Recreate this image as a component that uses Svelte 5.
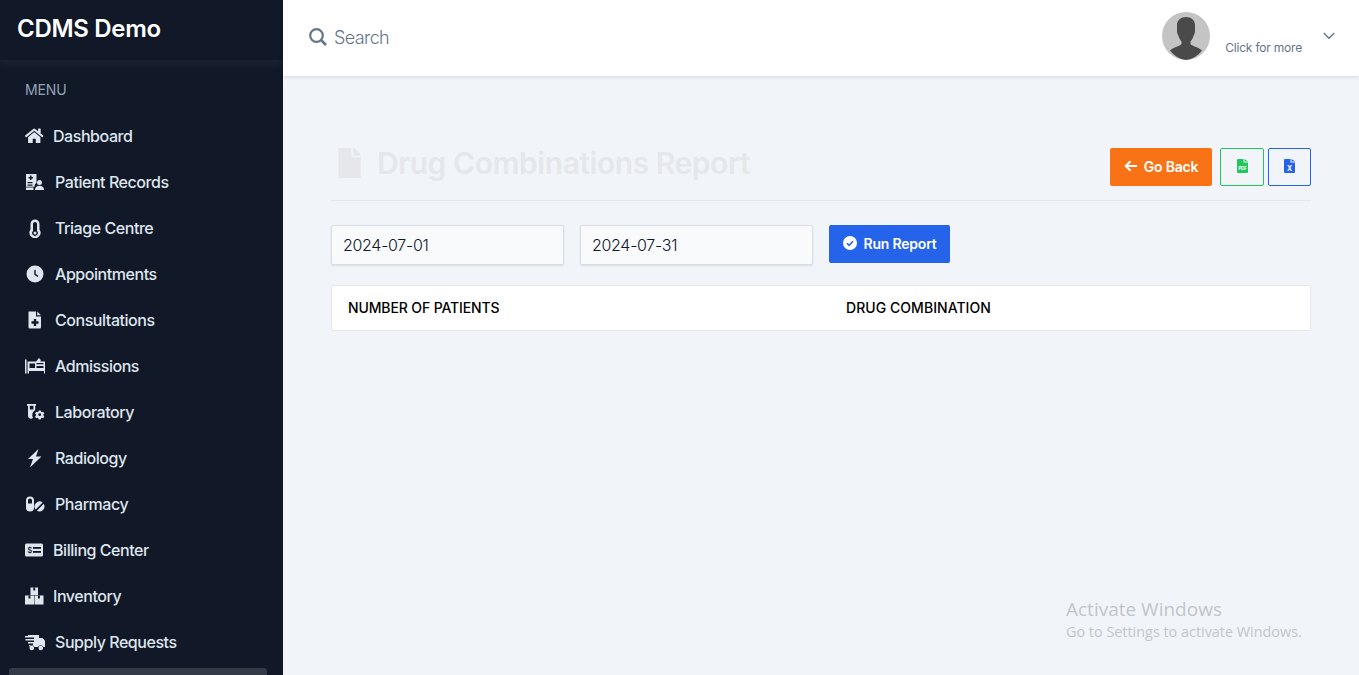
<script>
  const items = [
    { name: 'Dashboard', icon: 'home', wide: false },
    { name: 'Patient Records', icon: 'records', wide: true },
    { name: 'Triage Centre', icon: 'thermo', wide: true },
    { name: 'Appointments', icon: 'clock', wide: true },
    { name: 'Consultations', icon: 'medical', wide: true },
    { name: 'Admissions', icon: 'bed', wide: true },
    { name: 'Laboratory', icon: 'lab', wide: true },
    { name: 'Radiology', icon: 'bolt', wide: true },
    { name: 'Pharmacy', icon: 'pills', wide: true },
    { name: 'Billing Center', icon: 'bill', wide: false },
    { name: 'Inventory', icon: 'boxes', wide: false },
    { name: 'Supply Requests', icon: 'truck', wide: true }
  ];
</script>

<div class="shell">
  <aside class="sidebar">
    <div class="brand">CDMS Demo</div>
    <div class="menu-label">MENU</div>
    <nav class="nav">
      {#each items as item}
        <a class="nav-item" href="#top">
          <span class="nav-icon" class:wide={item.wide}>
            <svg viewBox="0 0 20 20" width="20" height="20" fill="currentColor">
              {#if item.icon === 'home'}
                <svg viewBox="0 0 576 512" x="0" y="1.5" width="18.500" height="16.500"><path d="M280.37 148.26L96 300.11V464a16 16 0 0 0 16 16l112.06-.29a16 16 0 0 0 15.92-16V368a16 16 0 0 1 16-16h64a16 16 0 0 1 16 16v95.64a16 16 0 0 0 16 16.05L464 480a16 16 0 0 0 16-16V300L295.67 148.26a12.19 12.19 0 0 0-15.3 0zM571.6 251.47L488 182.56V44.05a12 12 0 0 0-12-12h-56a12 12 0 0 0-12 12v72.61L318.47 43a48 48 0 0 0-61 0L4.34 251.47a12 12 0 0 0-1.6 16.9l25.5 31A12 12 0 0 0 45.15 301l235.22-193.74a12.19 12.19 0 0 1 15.3 0L530.9 301a12 12 0 0 0 16.9-1.6l25.5-31a12 12 0 0 0-1.7-16.93z"/></svg>
              {:else if item.icon === 'records'}
                <path fill-rule="evenodd" d="M1 2h10.500v8.700a4 4 0 0 0-2 4H1zM5 3.500V5H3.600v1.500H5V8h1.500V6.500H8V5H6.500V3.500zM2.500 10v1.200h5V10zM2.500 12.500v1.200h5v-1.200z"/>
                <path d="M1 15.500h7.500v2.500H1z"/>
                <circle cx="14.500" cy="10.500" r="2.500"/>
                <path d="M10 18c0-3 1.800-4.300 4.500-4.300s4.500 1.300 4.500 4.300z"/>
              {:else if item.icon === 'thermo'}
                <path fill-rule="evenodd" d="M10 1.500a4.500 4.500 0 0 1 4.500 4.500v5.500a5.500 5.500 0 1 1-9 0V6A4.500 4.500 0 0 1 10 1.500zm0 2.500A2 2 0 0 0 8 6v7a2.800 2.800 0 1 0 4 0V6a2 2 0 0 0-2-2z"/>
                <circle cx="10" cy="15" r="1.500"/>
              {:else if item.icon === 'clock'}
                <path fill-rule="evenodd" d="M10 1.500a8.500 8.500 0 1 1 0 17 8.500 8.500 0 0 1 0-17zM9.300 6v4.700l3.200 2.200.8-1.200-2.600-1.700V6z"/>
              {:else if item.icon === 'medical'}
                <path fill-rule="evenodd" d="M3.500 1.500h7.500v5h5v10.700a1.300 1.300 0 0 1-1.300 1.300H4.800a1.300 1.300 0 0 1-1.300-1.300zM8.800 9v2.300H6.500v2.400h2.300V16h2.400v-2.300h2.300v-2.400h-2.300V9zM12.200 1.500l3.800 3.800h-3.800z"/>
              {:else if item.icon === 'bed'}
                <svg x="0" y="0" width="21" height="20" viewBox="0 0 21 20"><path fill-rule="evenodd" d="M0 3.500h1.500V17.500H0zM2.500 5.500h8.500l3-3.500 2 2.300L15 5.500H20.500v12h-1.500V15H4v2.500H2.500zM4.500 7.500v4.500h5.500V7.500z"/><path d="M11.500 7h7v1.500h-7zM11.500 10h7v2h-7z" fill="#111827"/><path d="M11.500 8.500h7V10h-7z"/></svg>
              {:else if item.icon === 'lab'}
                <path fill-rule="evenodd" d="M2 2h9v1.800h-.8v4.300A5.500 5.500 0 0 0 8 15.800a2.900 2.900 0 0 1-5-2V3.800h-1zM4.800 3.800v3.600h3.600V3.800z"/>
                <path fill-rule="evenodd" d="M13.700 8.500h2l.3 1.200 1.100.6 1.200-.5 1 1.700-.9.900v1.200l.9.900-1 1.700-1.200-.5-1.100.6-.3 1.300h-2l-.3-1.300-1.100-.6-1.200.5-1-1.700.9-.9v-1.200l-.9-.9 1-1.700 1.200.5 1.100-.6zM14.700 11.300a1.400 1.400 0 1 0 0 2.800 1.400 1.400 0 0 0 0-2.800z"/>
              {:else if item.icon === 'bolt'}
                <path d="M13.500 1L3 11h5L5 19.500 16.500 8.500h-5.500z"/>
              {:else if item.icon === 'pills'}
                <path fill-rule="evenodd" d="M5 2.500a4 4 0 0 1 4 4v7a4 4 0 0 1-8 0v-7a4 4 0 0 1 4-4zm-2 7h4v-3a2 2 0 0 0-4 0z"/>
                <path d="M11 9a5 5 0 0 1 6.700-.4l-7 7A5 5 0 0 1 11 9zM18.700 9.800a5 5 0 0 1-6.800 6.900z"/>
              {:else if item.icon === 'bill'}
                <rect x="0" y="3.500" width="18" height="13" rx="1.500"/>
                <rect x="8" y="7" width="8" height="1.800" fill="#111827"/><rect x="8" y="11" width="8" height="1.800" fill="#111827"/>
                <text x="2.300" y="12.800" font-size="8" font-family="Inter, sans-serif" fill="#111827">$</text>
              {:else if item.icon === 'boxes'}
                <path d="M5.500 1.500h7.500v7.500H5.500zM0 9.500h9v9H0zM9.500 9.500h9v9h-9z"/>
                <path d="M8.300 1.500h1.900v3H8.300zM3.500 9.500h1.900v3H3.500zM13 9.500h1.900v3H13z" fill="#111827"/>
              {:else if item.icon === 'truck'}
                <svg x="0" y="0" width="21" height="20" viewBox="0 0 21 20"><path d="M3 3h11v3h3.500l3.500 4v5h-2.500a3 3 0 0 0-5.500 0H9.500a3 3 0 0 0-5.500 0V13h4v-1.500H3V10h6V8.500H.5V7H9V5.500H0V4h3z"/><circle cx="6.800" cy="16" r="2.300"/><circle cx="15.800" cy="16" r="2.300"/></svg>
              {/if}
            </svg>
          </span>
          <span>{item.name}</span>
        </a>
      {/each}
      <div class="nav-item active"></div>
    </nav>
  </aside>

  <div class="page">
    <header class="topbar">
      <div class="search">
        <svg viewBox="0 0 18 18" width="18" height="18" fill="none" stroke="currentColor"><circle cx="7.500" cy="7.500" r="6.300" stroke-width="2.200"/><path d="M12 12l5 5" stroke-width="2.600"/></svg>
        <span>Search</span>
      </div>
      <div class="user">
        <svg class="avatar" viewBox="0 0 48 48" width="48" height="48">
          <circle cx="24" cy="24" r="24" fill="#c4c4c4"/>
          <path fill="#4a4a4a" d="M15 13c0-5 4-8 9-8s9 3 9 8v6c0 2-.6 3-1.300 4.500-.7 2-1.700 4.500-3.200 6v2.500c0 1.500 9 3.500 11.500 6.500A24 24 0 0 1 24 48 24 24 0 0 1 8 38.500C10.500 35.500 19.500 33.500 19.500 32v-2.500c-1.500-1.500-2.500-4-3.200-6-.7-1.500-1.300-2.500-1.300-4.500z"/>
        </svg>
        <span class="more">Click for more</span>
        <svg class="chev" viewBox="0 0 12 8" width="12" height="8" fill="none" stroke="#64748b" stroke-width="1.300"><path d="M.7 1l5.300 5.300L11.300 1"/></svg>
      </div>
    </header>

    <main class="content">
      <div class="title-row">
        <h1>
          <svg viewBox="0 0 384 512" width="23" height="30" fill="currentColor"><path d="M224 136V0H24C10.700 0 0 10.700 0 24v464c0 13.300 10.700 24 24 24h336c13.300 0 24-10.700 24-24V160H248c-13.200 0-24-10.800-24-24zm160-14.100v6.100H256V0h6.100c6.400 0 12.500 2.500 17 7l97.900 98c4.500 4.500 7 10.600 7 16.900z"/></svg>
          Drug Combinations Report
        </h1>
        <div class="actions">
          <button class="btn back">
            <svg viewBox="0 0 14 12" width="14" height="12" fill="none" stroke="#fff" stroke-width="2"><path d="M13 6H2M6.500 1.200L1.700 6l4.800 4.800"/></svg>
            Go Back
          </button>
          <button class="btn outline pdf" aria-label="Export PDF">
            <svg viewBox="0 0 11 14" width="11" height="14"><path fill="#22c55e" d="M0 1a1 1 0 0 1 1-1h5.500v3.500H11V13a1 1 0 0 1-1 1H1a1 1 0 0 1-1-1zM7.500 0L11 2.500H7.500z"/><text x="5.500" y="10.500" font-size="4.500" font-weight="700" text-anchor="middle" fill="#fff" font-family="Inter, sans-serif">PDF</text></svg>
          </button>
          <button class="btn outline xls" aria-label="Export Excel">
            <svg viewBox="0 0 11 14" width="11" height="14"><path fill="#2563eb" d="M0 1a1 1 0 0 1 1-1h5.500v3.500H11V13a1 1 0 0 1-1 1H1a1 1 0 0 1-1-1zM7.500 0L11 2.500H7.500z"/><text x="5.500" y="11.500" font-size="7" font-weight="700" text-anchor="middle" fill="#fff" font-family="Inter, sans-serif">X</text></svg>
          </button>
        </div>
      </div>

      <div class="filters">
        <input class="date" value="2024-07-01" />
        <input class="date" value="2024-07-31" />
        <button class="btn run">
          <svg viewBox="0 0 14 14" width="14" height="14"><circle cx="7" cy="7" r="7" fill="#fff"/><path d="M4 7.200l2.100 2.100L10 5.300" fill="none" stroke="#2563eb" stroke-width="1.600"/></svg>
          Run Report
        </button>
      </div>

      <table class="report">
        <thead>
          <tr><th class="col-a">NUMBER OF PATIENTS</th><th class="col-b">DRUG COMBINATION</th></tr>
        </thead>
      </table>
    </main>
  </div>

  <div class="watermark">
    <div class="wm-a">Activate Windows</div>
    <div class="wm-b">Go to Settings to activate Windows.</div>
  </div>
</div>

<style>
  :global(body) { margin: 0; background: #f1f5f9; overflow: hidden; }
  * { box-sizing: border-box; }
  .shell {
    display: flex; height: 675px; overflow: hidden; position: relative;
    font-family: Inter, "Liberation Sans", sans-serif;
  }
  .sidebar { width: 283px; flex: none; background: #111827; color: #e2e8f0; overflow: hidden; }
  .brand {
    height: 60px; padding: 14px 17px 0; font-size: 24px; line-height: 30px; font-weight: 600;
    letter-spacing: -0.3px; color: #fff;
    box-shadow: 0 4px 8px rgba(71, 85, 105, 0.22);
  }
  .menu-label { margin: 21px 0 0 25px; font-size: 14px; line-height: 18px; color: #94a3b8; font-weight: 400; letter-spacing: -0.1px; }
  .nav { display: flex; flex-direction: column; gap: 6px; margin: 17px 16px 0 9px; }
  .nav-item {
    display: flex; align-items: center; gap: 8px; height: 40px; padding: 0 16px; flex: none;
    color: #dfe6ef; text-decoration: none; font-size: 16px; font-weight: 450; letter-spacing: -0.45px;
  }
  .nav-icon { width: 20px; height: 20px; display: flex; flex: none; }
  .nav-icon.wide { width: 22px; }
  .nav-item.active { background: #333a48; border-radius: 3px; }

  .page { flex: 1; min-width: 0; background: #f1f5f9; }
  .topbar {
    height: 76px; background: #fff; display: flex; align-items: stretch; justify-content: space-between;
    padding: 0 24px 0 26px; box-shadow: 0 1px 4px rgba(15, 23, 42, 0.12); position: relative;
  }
  .search { display: flex; align-items: center; gap: 7px; color: #64748b; font-size: 18px; font-weight: 300; letter-spacing: -0.6px; padding-bottom: 2px; }
  .user { display: flex; align-items: flex-start; }
  .avatar { margin-top: 12px; margin-right: -1px; transform: translateX(1px); }
  .more { margin: 40px 21px 0 17px; font-size: 12px; line-height: 15px; color: #64748b; letter-spacing: -0.2px; }
  .chev { margin-top: 32px; }

  .content { padding: 64px 48px 0; }
  .title-row {
    display: flex; justify-content: space-between; height: 61px; border-bottom: 1px solid #e2e8f0; padding-top: 8px;
  }
  h1 {
    margin: 0; display: flex; align-items: center; gap: 16px; height: 30px; padding-left: 7px; margin-top: 0;
    font-size: 30px; font-weight: 600; letter-spacing: -0.45px; color: #e5e7eb;
  }
  .actions { display: flex; gap: 8px; }
  .btn {
    display: inline-flex; align-items: center; justify-content: center; height: 38px; border-radius: 2px;
    border: 1px solid transparent; font: inherit; font-size: 14px; font-weight: 600; letter-spacing: -0.2px; color: #fff; padding: 0 0 2px;
  }
  .back { width: 102px; background: #f97316; gap: 6px; }
  .outline { background: transparent; }
  .pdf { width: 44px; border-color: #22c55e; }
  .xls { width: 43px; margin-left: -4px; border-color: #2563eb; }
  .filters { display: flex; gap: 16px; margin-top: 24px; align-items: flex-start; }
  .date {
    width: 233px; height: 40px; border: 1px solid #d9dee5; border-radius: 2px; background: #f8fafc;
    padding: 0 11px; font: inherit; font-size: 16px; font-weight: 300; color: #111827; outline: none;
    box-shadow: 0 1px 2px rgba(15, 23, 42, 0.1); letter-spacing: -0.3px;
  }
  .run { width: 121px; background: #2563eb; gap: 6px; padding-left: 1px; }
  .report {
    width: 100%; margin-top: 20px; border-collapse: separate; border-spacing: 0; background: #fff;
    border: 1px solid #e5e7eb; border-radius: 2px;
  }
  th {
    height: 44px; padding: 0 16px 2px; text-align: left; font-size: 14px; font-weight: 500; color: #000; letter-spacing: -0.12px;
  }
  .col-a { width: 498px; }
  .col-b { letter-spacing: 0.05px; }
  .watermark {
    position: absolute; left: 1066px; top: 598px; color: #c2c5ca; font-family: "Open Sans", sans-serif; pointer-events: none;
  }
  .wm-a { font-size: 19px; line-height: 23px; letter-spacing: 0; }
  .wm-b { font-size: 14.400px; line-height: 20px; margin-top: 1px; }
</style>
